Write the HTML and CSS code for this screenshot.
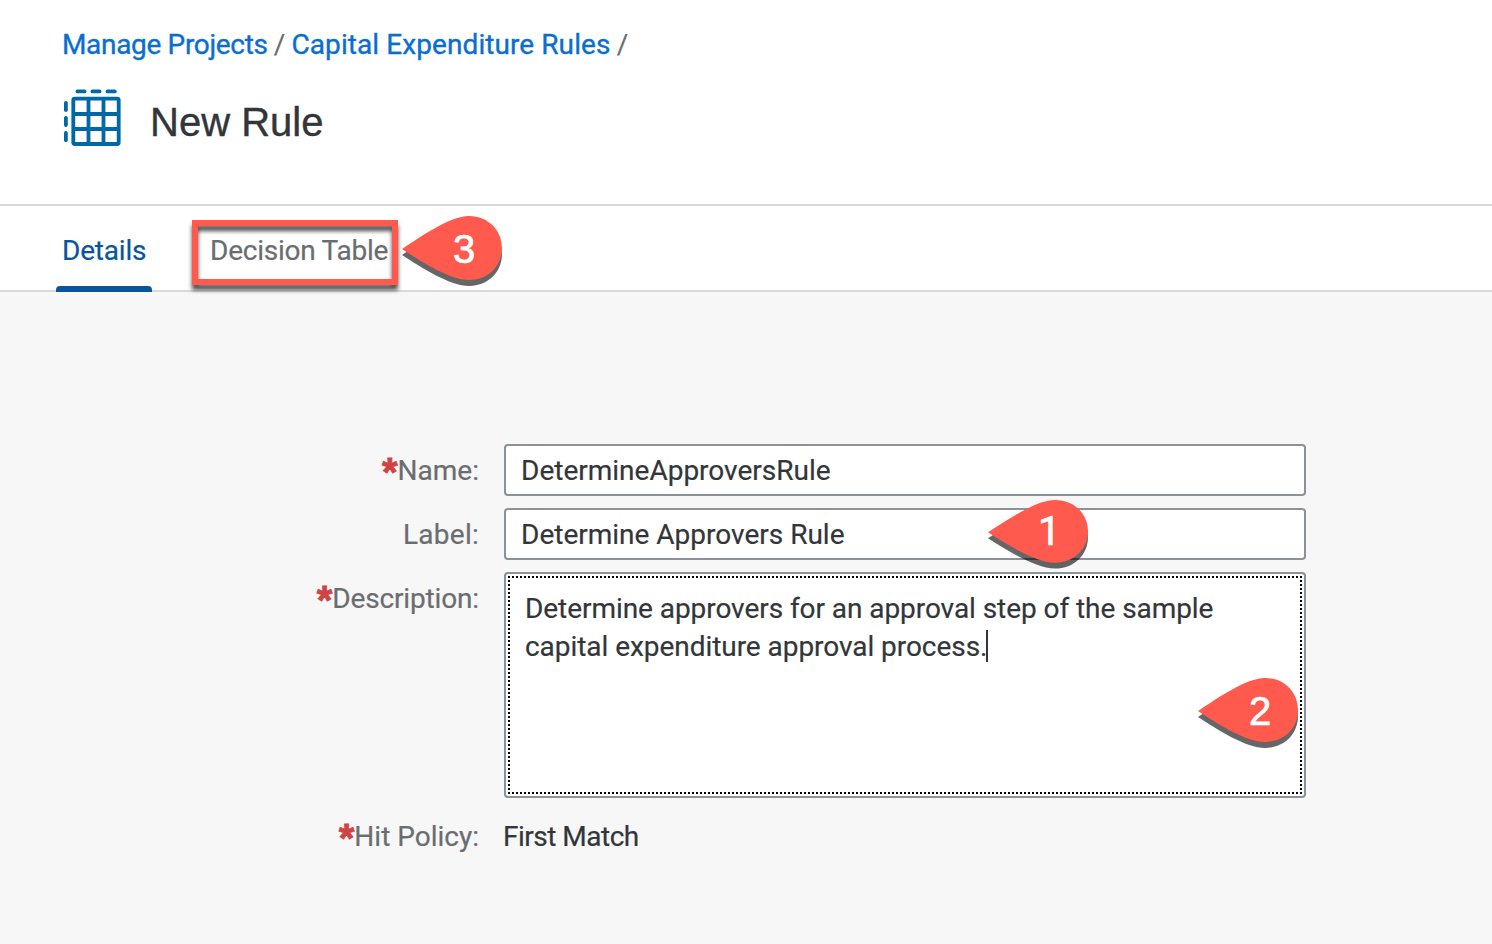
FILE: index.html
```html
<!DOCTYPE html>
<html lang="en">
<head>
<meta charset="utf-8">
<title>New Rule</title>
<link rel="stylesheet" href="styles.css">
</head>
<body>
<header class="page-header">
  <nav class="breadcrumb">
    <a class="crumb crumb-projects">Manage Projects</a><span class="slash">/</span><a class="crumb crumb-rules">Capital Expenditure Rules</a><span class="slash">/</span>
  </nav>
  <div class="title-row">
    <svg class="title-icon" width="58" height="58" viewBox="0 0 58 58" fill="none" stroke="#0069a5" stroke-width="3.8" stroke-linecap="round">
      <path d="M13.4 2.4H20.6M28.4 2.4H35.6M43.6 2.4H50.8"/>
      <path d="M1.9 13.8V21M1.9 28.8V36M1.9 44V51.2"/>
      <rect x="9.3" y="9.6" width="45.4" height="45.4" rx="1.5"/>
      <path stroke-linecap="butt" d="M24.5 10V55M39.5 10V55M10 25H55M10 40H55"/>
    </svg>
    <h1 class="title">New Rule</h1>
  </div>
</header>
<div class="tabs">
  <div class="tab tab-active"><span class="t-details">Details</span></div>
  <div class="tab tab-decision"><span class="t-decision">Decision Table</span><i class="highlight"></i></div>
</div>
<main class="form">
  <label class="label"><b class="star">*</b><span class="t-name">Name:</span></label>
  <div class="field"><span class="v-name">DetermineApproversRule</span></div>
  <label class="label"><span class="t-label">Label:</span></label>
  <div class="field"><span class="v-label">Determine Approvers Rule</span></div>
  <label class="label"><b class="star">*</b><span class="t-desc">Description:</span></label>
  <div class="area"><div class="area-focus"><span class="v-d1">Determine approvers for an approval step of the sample</span><br><span class="v-d2">capital expenditure approval process.</span><i class="caret"></i></div></div>
  <label class="label"><b class="star">*</b><span class="t-hit">Hit Policy:</span></label>
  <div class="value"><span class="v-hit">First Match</span></div>
</main>
<svg width="0" height="0" class="defs">
  <defs><path id="pin" d="M0 33C20 20 48 0 67 0C86 0 100 14 100 32C100 50 86 64 67 64C48 64 20 46 0 33Z"/></defs>
</svg>
<div class="pin pin-3"><svg width="102" height="72"><use href="#pin" y="6" class="pin-shadow"/><use href="#pin" class="pin-body"/></svg><span class="num">3</span></div>
<div class="pin pin-1"><svg width="102" height="72" viewBox="0 0 102 73.5" preserveAspectRatio="none"><use href="#pin" y="6" class="pin-shadow"/><use href="#pin" class="pin-body"/></svg><span class="num">1</span></div>
<div class="pin pin-2"><svg width="102" height="72"><use href="#pin" y="6" class="pin-shadow"/><use href="#pin" class="pin-body"/></svg><span class="num">2</span></div>
</body>
</html>
```
FILE: styles.css
```css
* { box-sizing: border-box; }
body { margin: 0; height: 944px; overflow: hidden; position: relative; background: #f7f7f7; color: #32363a; font: 28px/38px Roboto, "Noto Sans", sans-serif; -webkit-text-stroke: 0.2px; }
.page-header { height: 206px; background: #fff; border-bottom: 2px solid #d9d9d9; padding: 26px 0 0 62px; }
.breadcrumb { display: flex; height: 38px; white-space: nowrap; }
.crumb { color: #0a6ed1; -webkit-text-stroke: 0.35px; }
.crumb-projects { width: 205.5px; letter-spacing: -0.33px; }
.crumb-rules { width: 319px; letter-spacing: 0.08px; }
.slash { color: #6a6d70; width: 24px; text-align: center; }
.title-row { display: flex; gap: 28px; padding: 25px 0 0 2px; }
.title { margin: 10px 0 0; font: 400 40px/46px "Liberation Sans", sans-serif; -webkit-text-stroke: 0.4px; }
.tabs { display: flex; height: 86px; background: #fff; border-bottom: 2px solid #d9d9d9; padding-left: 56px; }
.tab { position: relative; padding: 26px 6px 0; height: 86px; color: #6a6d70; white-space: nowrap; }
.tab-active { width: 96px; color: #0854a0; }
.tab-active::after { content: ""; position: absolute; left: 0; bottom: 0; width: 96px; height: 6px; border-radius: 4px 4px 0 0; background: #0854a0; }
.tab-decision { margin-left: 52px; }
.t-details { letter-spacing: -0.2px; }
.t-decision { letter-spacing: -0.25px; }
.highlight { position: absolute; left: -12px; top: 14px; width: 206px; height: 65px; border: 6px solid #ff5a4d; filter: drop-shadow(0 5px 2px rgba(0,0,0,.7)); }
.form { display: grid; grid-template-columns: 479px 802px; column-gap: 25px; row-gap: 12px; padding-top: 152px; grid-template-rows: 52px 52px 226px 52px; white-space: nowrap; }
.label { color: #6a6d70; text-align: right; padding-top: 8px; }
.star { color: #d04343; font: bold 40px/0 "Liberation Sans", sans-serif; -webkit-text-stroke: 0.8px; position: relative; top: 6px; }
.t-label { letter-spacing: 0.25px; }
.t-desc { letter-spacing: -0.15px; }
.field { background: #fff; border: 2px solid #89919a; border-radius: 4px; padding: 6px 15px; }
.area { background: #fff; border: 2px solid #89919a; border-radius: 4px; padding: 2px; }
.area-focus { height: 218px; border: 2px dotted #000; padding: 12px 15px; }
.v-d1 { letter-spacing: -0.06px; }
.v-d2 { letter-spacing: -0.05px; }
.caret { display: inline-block; width: 2px; height: 32px; margin-left: -1.5px; background: #32363a; vertical-align: -6px; }
.value { padding-top: 8px; margin-left: -1px; }
.v-hit { letter-spacing: -0.5px; }
.defs { position: absolute; }
.pin { position: absolute; width: 102px; height: 72px; }
.pin-3 { left: 402px; top: 216px; }
.pin-1 { left: 988px; top: 500px; }
.pin-2 { left: 1198px; top: 678px; }
.pin-body { fill: #ff5a4d; }
.pin-shadow { fill: rgba(0,0,0,.6); }
.num { position: absolute; left: 51px; top: 10px; font: 40px/46px "Liberation Sans", sans-serif; color: #fff; -webkit-text-stroke: 0.7px; }
.pin-1 .num { left: 50px; top: 9px; font-family: Roboto, sans-serif; }
```
